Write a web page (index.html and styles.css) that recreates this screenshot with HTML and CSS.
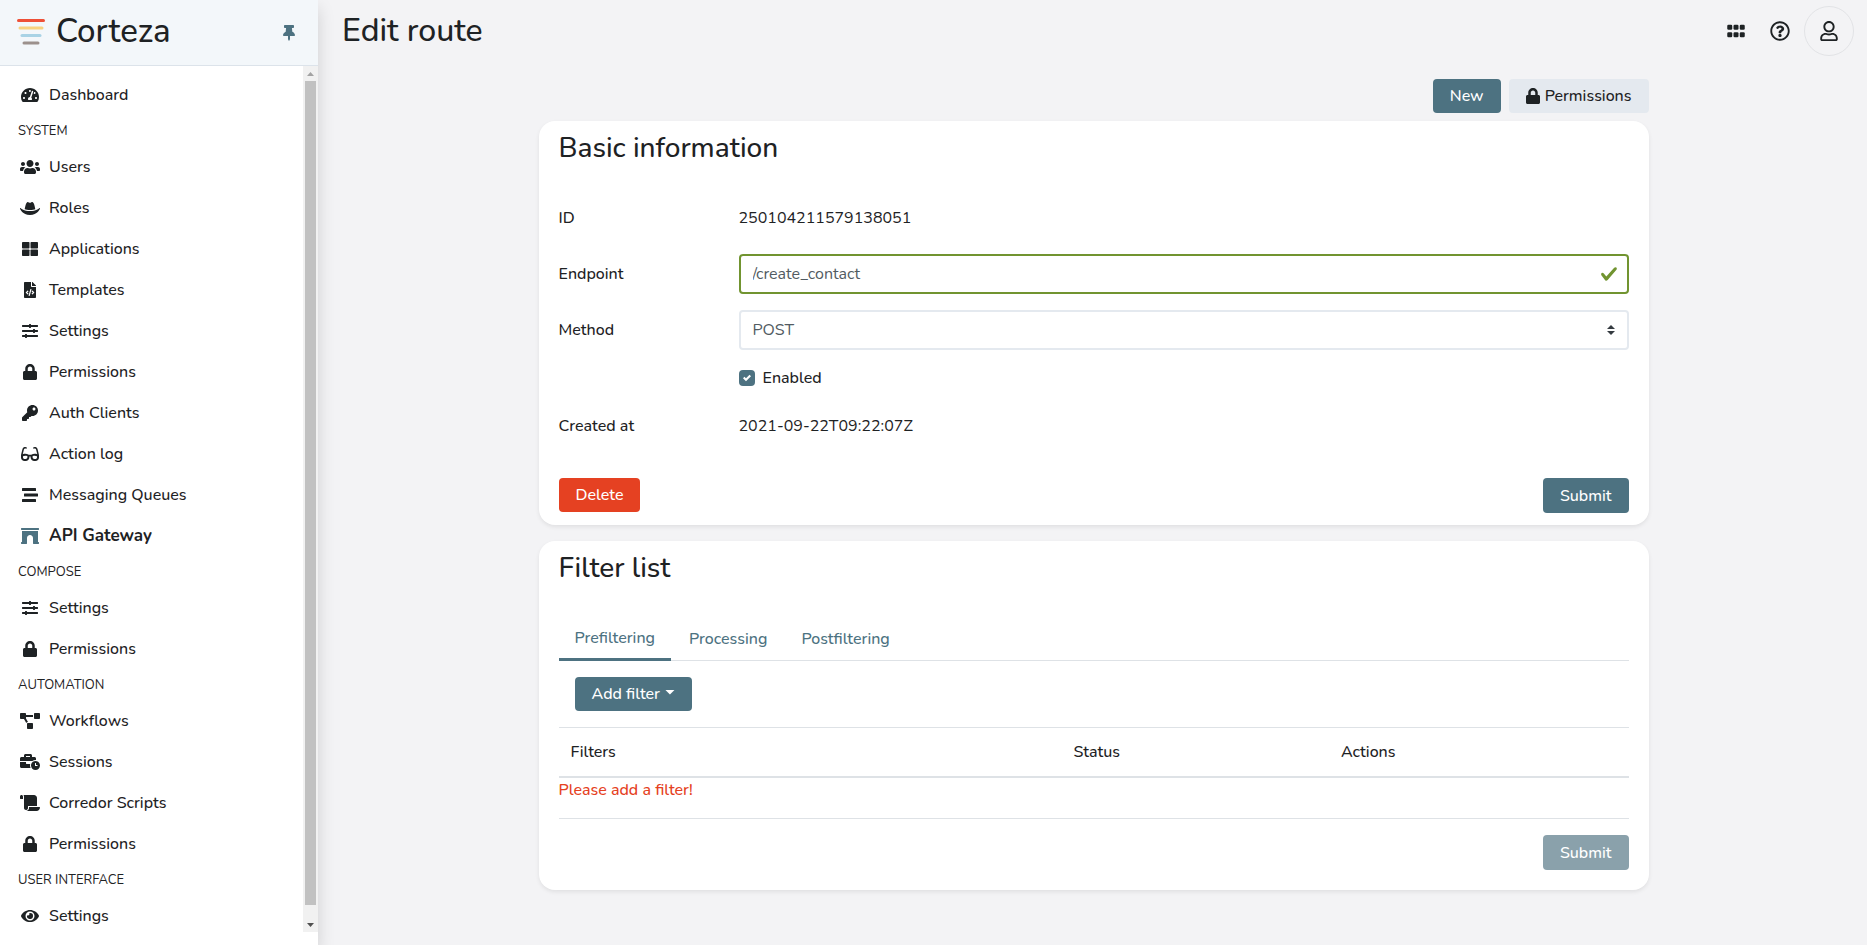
FILE: index.html
```html
<!DOCTYPE html>
<html lang="en">
<head>
<meta charset="utf-8">
<meta name="viewport" content="width=device-width, initial-scale=1">
<title>Edit route - Corteza</title>
<link rel="stylesheet" href="styles.css">
</head>
<body>
<svg class="sprite" aria-hidden="true">
  <symbol id="i-dashboard" viewBox="0 0 576 512"><path d="M288 32C128.94 32 0 160.94 0 320c0 52.8 14.25 102.26 39.06 144.8 5.61 9.62 16.3 15.2 27.44 15.2h443c11.14 0 21.83-5.58 27.44-15.2C561.75 422.26 576 372.8 576 320c0-159.06-128.94-288-288-288zm0 64c14.71 0 26.58 10.13 30.32 23.65-1.11 2.26-2.64 4.23-3.45 6.67l-9.22 27.67c-5.13 3.49-10.97 6.01-17.64 6.01-17.67 0-32-14.33-32-32S270.33 96 288 96zM96 384c-17.67 0-32-14.33-32-32s14.33-32 32-32 32 14.33 32 32-14.33 32-32 32zm48-160c-17.67 0-32-14.33-32-32s14.33-32 32-32 32 14.33 32 32-14.33 32-32 32zm246.77-72.41l-61.33 184C343.13 347.33 352 364.54 352 384c0 11.72-3.38 22.55-8.88 32H232.88c-5.5-9.45-8.88-20.28-8.88-32 0-33.94 26.5-61.43 59.9-63.59l61.34-184.01c4.17-12.56 17.73-19.45 30.36-15.17 12.57 4.19 19.35 17.79 15.17 30.36zm14.66 57.2l15.52-46.55c3.47-1.29 7.13-2.23 11.05-2.23 17.67 0 32 14.33 32 32s-14.33 32-32 32c-11.38-.01-20.89-6.28-26.57-15.22zM480 384c-17.67 0-32-14.33-32-32s14.33-32 32-32 32 14.33 32 32-14.33 32-32 32z"/></symbol>
  <symbol id="i-users" viewBox="0 0 640 512"><path d="M96 224c35.3 0 64-28.7 64-64s-28.7-64-64-64-64 28.7-64 64 28.7 64 64 64zm448 0c35.3 0 64-28.7 64-64s-28.7-64-64-64-64 28.7-64 64 28.7 64 64 64zm32 32h-64c-17.6 0-33.5 7.1-45.1 18.6 40.3 22.1 68.9 62 75.1 109.4h66c17.7 0 32-14.3 32-32v-32c0-35.3-28.7-64-64-64zm-256 0c61.9 0 112-50.1 112-112S381.9 32 320 32 208 82.1 208 144s50.1 112 112 112zm76.8 32h-8.3c-20.8 10-43.9 16-68.5 16s-47.6-6-68.5-16h-8.3C179.6 288 128 339.6 128 403.2V432c0 26.5 21.5 48 48 48h288c26.5 0 48-21.5 48-48v-28.8c0-63.6-51.6-115.2-115.2-115.2zm-223.7-13.4C161.5 263.1 145.6 256 128 256H64c-35.3 0-64 28.7-64 64v32c0 17.7 14.3 32 32 32h65.9c6.3-47.4 34.9-87.3 75.2-109.4z"/></symbol>
  <symbol id="i-hat" viewBox="0 0 640 512"><path d="M490 296.9C480.51 239.51 450.51 64 392.3 64c-14 0-26.49 5.93-37 14a58.21 58.21 0 0 1-70.58 0c-10.51-8-23-14-37-14-58.2 0-88.2 175.47-97.71 232.88C188.81 309.47 243.73 320 320 320s131.23-10.51 170-23.1zm142.9-37.18a16 16 0 0 0-19.75 1.5c-1 .9-101.27 90.78-293.16 90.78-190.82 0-292.22-89.94-293.24-90.84A16 16 0 0 0 1 278.53C1.73 280.55 78.32 480 320 480s318.27-199.45 319-201.47a16 16 0 0 0-6.09-18.81z"/></symbol>
  <symbol id="i-large" viewBox="0 0 512 512"><rect x="0" y="32" width="240" height="208" rx="24"/><rect x="272" y="32" width="240" height="208" rx="24"/><rect x="0" y="272" width="240" height="208" rx="24"/><rect x="272" y="272" width="240" height="208" rx="24"/></symbol>
  <symbol id="i-code" viewBox="0 0 384 512"><path d="M384 121.941V128H256V0h6.059c6.365 0 12.47 2.529 16.971 7.029l97.941 97.941A24.005 24.005 0 0 1 384 121.941zM248 160c-13.2 0-24-10.8-24-24V0H24C10.745 0 0 10.745 0 24v464c0 13.255 10.745 24 24 24h336c13.255 0 24-10.745 24-24V160H248zM123.206 400.505a5.4 5.4 0 0 1-7.633.246l-64.866-60.812a5.4 5.4 0 0 1 0-7.879l64.866-60.812a5.4 5.4 0 0 1 7.633.246l19.579 20.885a5.4 5.4 0 0 1-.372 7.747L101.65 336l40.763 35.874a5.4 5.4 0 0 1 .372 7.747l-19.579 20.884zm51.295 50.479l-27.453-7.97a5.402 5.402 0 0 1-3.681-6.692l61.44-211.626a5.402 5.402 0 0 1 6.692-3.681l27.452 7.97a5.4 5.4 0 0 1 3.68 6.692l-61.44 211.626a5.397 5.397 0 0 1-6.69 3.681zm160.792-111.045l-64.866 60.812a5.4 5.4 0 0 1-7.633-.246l-19.58-20.885a5.4 5.4 0 0 1 .372-7.747L284.35 336l-40.763-35.874a5.4 5.4 0 0 1-.372-7.747l19.58-20.885a5.4 5.4 0 0 1 7.633-.246l64.866 60.812a5.4 5.4 0 0 1-.001 7.879z"/></symbol>
  <symbol id="i-sliders" viewBox="0 0 512 512"><path d="M496 384H160v-16c0-8.8-7.2-16-16-16h-32c-8.8 0-16 7.2-16 16v16H16c-8.8 0-16 7.2-16 16v32c0 8.8 7.2 16 16 16h80v16c0 8.8 7.2 16 16 16h32c8.8 0 16-7.2 16-16v-16h336c8.8 0 16-7.2 16-16v-32c0-8.8-7.2-16-16-16zm0-160h-80v-16c0-8.8-7.2-16-16-16h-32c-8.8 0-16 7.2-16 16v16H16c-8.8 0-16 7.2-16 16v32c0 8.8 7.2 16 16 16h336v16c0 8.8 7.2 16 16 16h32c8.8 0 16-7.2 16-16v-16h80c8.8 0 16-7.2 16-16v-32c0-8.8-7.2-16-16-16zm0-160H288V48c0-8.8-7.2-16-16-16h-32c-8.8 0-16 7.2-16 16v16H16C7.2 64 0 71.2 0 80v32c0 8.8 7.2 16 16 16h208v16c0 8.8 7.2 16 16 16h32c8.8 0 16-7.2 16-16v-16h208c8.8 0 16-7.2 16-16V80c0-8.8-7.2-16-16-16z"/></symbol>
  <symbol id="i-lock" viewBox="0 0 448 512"><path d="M400 224h-24v-72C376 68.2 307.8 0 224 0S72 68.2 72 152v72H48c-26.5 0-48 21.5-48 48v192c0 26.5 21.5 48 48 48h352c26.5 0 48-21.5 48-48V272c0-26.5-21.5-48-48-48zm-104 0H152v-72c0-39.7 32.3-72 72-72s72 32.3 72 72v72z"/></symbol>
  <symbol id="i-key" viewBox="0 0 512 512"><path d="M512 176.001C512 273.203 433.202 352 336 352c-11.22 0-22.19-1.062-32.827-3.069l-24.012 27.014A23.999 23.999 0 0 1 261.223 384H224v40c0 13.255-10.745 24-24 24h-40v40c0 13.255-10.745 24-24 24H24c-13.255 0-24-10.745-24-24v-78.059c0-6.365 2.529-12.47 7.029-16.971l161.802-161.802C163.108 213.814 160 195.271 160 176 160 78.798 238.797.001 335.999 0 433.488-.001 512 78.511 512 176.001zM336 128c0 26.51 21.49 48 48 48s48-21.49 48-48-21.49-48-48-48-48 21.49-48 48z"/></symbol>
  <symbol id="i-glasses" viewBox="0 0 576 512"><path d="M574.1 280.37L528.75 98.66c-5.91-23.7-21.59-44.05-43-55.81-21.44-11.73-46.97-14.11-70.19-6.33l-15.25 5.08c-8.39 2.79-12.92 11.86-10.12 20.24l5.06 15.18c2.79 8.38 11.85 12.91 20.23 10.12l13.18-4.39c10.87-3.62 23-3.57 33.16 1.73 10.29 5.37 17.57 14.56 20.37 25.82l38.46 153.82c-22.19-6.81-49.79-12.46-81.2-12.46-34.77 0-73.98 7.02-114.85 26.74h-73.18c-40.87-19.74-80.08-26.75-114.86-26.75-31.42 0-59.02 5.65-81.21 12.46l38.46-153.83c2.79-11.25 10.09-20.45 20.38-25.81 10.16-5.3 22.28-5.35 33.15-1.73l13.17 4.39c8.38 2.79 17.44-1.74 20.23-10.12l5.06-15.18c2.8-8.38-1.73-17.45-10.12-20.24l-15.25-5.08c-23.22-7.78-48.75-5.41-70.19 6.33-21.41 11.77-37.09 32.11-43 55.8L1.9 280.37A64.218 64.218 0 0 0 0 295.86v70.25C0 429.01 51.58 480 115.2 480h37.12c60.28 0 110.37-45.94 114.88-105.37l2.93-38.63h35.75l2.93 38.63C313.31 434.06 363.4 480 423.68 480h37.12c63.62 0 115.2-50.99 115.2-113.88v-70.25c0-5.23-.64-10.43-1.9-15.5zm-370.72 89.42c-1.97 25.91-24.4 46.21-51.06 46.21H115.2C86.97 416 64 393.62 64 366.11v-37.54c18.12-6.49 43.42-12.92 72.58-12.92 23.86 0 47.26 4.33 69.93 12.92l-3.13 41.22zM512 366.12c0 27.51-22.97 49.88-51.2 49.88h-37.12c-26.67 0-49.1-20.3-51.06-46.21l-3.13-41.22c22.67-8.59 46.08-12.92 69.95-12.92 29.12 0 54.43 6.44 72.55 12.93v37.54z"/></symbol>
  <symbol id="i-stream" viewBox="0 0 512 512"><rect x="0" y="32" width="448" height="96" rx="16"/><rect x="64" y="208" width="448" height="96" rx="16"/><rect x="0" y="384" width="448" height="96" rx="16"/></symbol>
  <symbol id="i-archway" viewBox="0 0 576 512"><path d="M560 448h-16V96H32v352H16.02c-8.84 0-16 7.16-16 16v32c0 8.84 7.16 16 16 16H176c8.84 0 16-7.16 16-16V320c0-53.02 42.98-96 96-96s96 42.98 96 96l.02 160v16c0 8.84 7.16 16 16 16H560c8.84 0 16-7.16 16-16v-32c0-8.84-7.16-16-16-16zm0-448H16C7.16 0 0 7.16 0 16v32c0 8.84 7.16 16 16 16h544c8.84 0 16-7.16 16-16V16c0-8.84-7.16-16-16-16z"/></symbol>
  <symbol id="i-diagram" viewBox="0 0 640 512"><path d="M384 320H256c-17.67 0-32 14.33-32 32v128c0 17.67 14.33 32 32 32h128c17.67 0 32-14.33 32-32V352c0-17.67-14.33-32-32-32zM192 32c0-17.67-14.33-32-32-32H32C14.33 0 0 14.33 0 32v128c0 17.67 14.33 32 32 32h95.72l73.16 128.04C211.98 300.98 232.4 288 256 288h.28L192 175.51V128h224V64H192V32zM608 0H480c-17.67 0-32 14.33-32 32v128c0 17.67 14.33 32 32 32h128c17.67 0 32-14.33 32-32V32c0-17.67-14.33-32-32-32z"/></symbol>
  <symbol id="i-business" viewBox="0 0 640 512"><path d="M496 224c-79.59 0-144 64.41-144 144s64.41 144 144 144 144-64.41 144-144-64.41-144-144-144zm64 150.29c0 5.34-4.37 9.71-9.71 9.71h-60.57c-5.34 0-9.71-4.37-9.71-9.71v-76.57c0-5.34 4.37-9.71 9.71-9.71h12.57c5.34 0 9.71 4.37 9.71 9.71V352h38.29c5.34 0 9.71 4.37 9.71 9.71v12.58zM496 192c5.4 0 10.72.33 16 .81V144c0-25.6-22.4-48-48-48h-80V48c0-25.6-22.4-48-48-48H176c-25.6 0-48 22.4-48 48v48H48c-25.6 0-48 22.4-48 48v80h395.12c28.6-20.09 63.35-32 100.88-32zM320 96H192V64h128v32zm6.82 224H208c-8.84 0-16-7.16-16-16v-48H0v144c0 25.6 22.4 48 48 48h291.43C327.1 423.96 320 396.82 320 368c0-16.66 2.48-32.72 6.82-48z"/></symbol>
  <symbol id="i-scroll" viewBox="0 0 640 512"><path d="M48 0C21.53 0 0 21.53 0 48v64c0 8.84 7.16 16 16 16h80V48C96 21.53 74.47 0 48 0zm208 412.57V352h288V96c0-52.94-43.06-96-96-96H111.59C121.74 13.41 128 29.92 128 48v368c0 38.87 34.65 69.65 74.75 63.12C234.22 474 256 444.46 256 412.57zM288 384v32c0 52.93-43.06 96-96 96h336c61.86 0 112-50.14 112-112 0-8.84-7.16-16-16-16H288z"/></symbol>
  <symbol id="i-eye" viewBox="0 0 576 512"><path d="M572.52 241.4C518.29 135.59 410.93 64 288 64S57.68 135.64 3.48 241.41a32.35 32.35 0 0 0 0 29.19C57.71 376.41 165.07 448 288 448s230.32-71.64 284.52-177.41a32.35 32.35 0 0 0 0-29.19zM288 400a144 144 0 1 1 144-144 143.93 143.93 0 0 1-144 144zm0-240a95.31 95.31 0 0 0-25.31 3.79 47.85 47.85 0 0 1-66.9 66.9A95.78 95.78 0 1 0 288 160z"/></symbol>
  <symbol id="i-pin" viewBox="0 0 384 512"><path d="M298.028 214.267L285.793 96H328c13.255 0 24-10.745 24-24V24c0-13.255-10.745-24-24-24H56C42.745 0 32 10.745 32 24v48c0 13.255 10.745 24 24 24h42.207L85.972 214.267C37.465 236.82 0 277.261 0 328c0 13.255 10.745 24 24 24h136v104.007c0 1.242.289 2.467.845 3.578l24 48c2.941 5.882 11.364 5.893 14.311 0l24-48a8.008 8.008 0 0 0 .845-3.578V352h136c13.255 0 24-10.745 24-24-.001-51.183-37.983-91.42-85.973-113.733z"/></symbol>
  <symbol id="i-grip" viewBox="0 0 448 512"><rect x="0" y="96" width="128" height="128" rx="32"/><rect x="160" y="96" width="128" height="128" rx="32"/><rect x="320" y="96" width="128" height="128" rx="32"/><rect x="0" y="288" width="128" height="128" rx="32"/><rect x="160" y="288" width="128" height="128" rx="32"/><rect x="320" y="288" width="128" height="128" rx="32"/></symbol>
  <symbol id="i-help" viewBox="0 0 512 512"><path d="M256 8C119.043 8 8 119.083 8 256c0 136.997 111.043 248 248 248s248-111.003 248-248C504 119.083 392.957 8 256 8zm0 448c-110.532 0-200-89.431-200-200 0-110.495 89.472-200 200-200 110.491 0 200 89.471 200 200 0 110.53-89.431 200-200 200zm107.244-255.2c0 67.052-72.421 68.084-72.421 92.863V300c0 6.627-5.373 12-12 12h-45.647c-6.627 0-12-5.373-12-12v-8.659c0-35.745 27.1-50.034 47.579-61.516 17.561-9.845 28.324-16.541 28.324-29.579 0-17.246-21.999-28.693-39.784-28.693-23.189 0-33.894 10.977-48.942 29.969-4.057 5.12-11.46 6.071-16.666 2.124l-27.824-21.098c-5.107-3.872-6.251-11.066-2.644-16.363C184.846 131.491 214.94 112 261.794 112c49.071 0 101.45 38.304 101.45 88.8zM298 368c0 23.159-18.841 42-42 42s-42-18.841-42-42 18.841-42 42-42 42 18.841 42 42z"/></symbol>
  <symbol id="i-user" viewBox="0 0 448 512"><path d="M313.6 304c-28.7 0-42.5 16-89.6 16-47.1 0-60.8-16-89.6-16C60.2 304 0 364.2 0 438.4V464c0 26.5 21.5 48 48 48h352c26.5 0 48-21.5 48-48v-25.6c0-74.2-60.2-134.4-134.4-134.4zM400 464H48v-25.6c0-47.6 38.8-86.4 86.4-86.4 14.6 0 38.3 16 89.6 16 51.7 0 74.9-16 89.6-16 47.6 0 86.4 38.8 86.4 86.4V464zM224 288c79.5 0 144-64.5 144-144S303.5 0 224 0 80 64.5 80 144s64.5 144 144 144zm0-240c52.9 0 96 43.1 96 96s-43.1 96-96 96-96-43.1-96-96 43.1-96 96-96z"/></symbol>
  <symbol id="i-check" viewBox="0 0 8 8"><path d="M2.3 6.73L.6 4.53c-.4-1.04.46-1.4 1.1-.8l1.1 1.4 3.4-3.8c.6-.63 1.6-.27 1.2.7l-4 4.6c-.43.5-.8.4-1.1.1z"/></symbol>
  <symbol id="i-tick" viewBox="0 0 8 8"><path d="M6.564.75l-3.59 3.612-1.538-1.55L0 4.26l2.974 2.99L8 2.193z"/></symbol>
  <symbol id="i-updown" viewBox="0 0 4 5"><path d="M2 0L0 2h4zm0 5L0 3h4z"/></symbol>
</svg>

<div class="app">
  <aside class="sidebar">
    <div class="brand">
      <svg class="brand-mark" viewBox="0 0 28 28" aria-hidden="true">
        <path class="bar-red" d="M1.500 2.500h25"/>
        <path class="bar-yellow" d="M3 10h22"/>
        <path class="bar-blue" d="M5 17.500h18"/>
        <path class="bar-gray" d="M7 25h14"/>
      </svg>
      <span class="brand-name">Corteza</span>
      <button class="pin" type="button" aria-label="Unpin sidebar"><svg class="icon"><use href="#i-pin"/></svg></button>
    </div>
    <div class="nav-area">
      <nav class="nav">
        <a class="nav-item" href="#"><svg class="icon"><use href="#i-dashboard"/></svg>Dashboard</a>
        <h2 class="nav-label">SYSTEM</h2>
        <a class="nav-item" href="#"><svg class="icon"><use href="#i-users"/></svg>Users</a>
        <a class="nav-item" href="#"><svg class="icon"><use href="#i-hat"/></svg>Roles</a>
        <a class="nav-item" href="#"><svg class="icon"><use href="#i-large"/></svg>Applications</a>
        <a class="nav-item" href="#"><svg class="icon"><use href="#i-code"/></svg>Templates</a>
        <a class="nav-item" href="#"><svg class="icon"><use href="#i-sliders"/></svg>Settings</a>
        <a class="nav-item" href="#"><svg class="icon"><use href="#i-lock"/></svg>Permissions</a>
        <a class="nav-item" href="#"><svg class="icon"><use href="#i-key"/></svg>Auth Clients</a>
        <a class="nav-item" href="#"><svg class="icon"><use href="#i-glasses"/></svg>Action log</a>
        <a class="nav-item" href="#"><svg class="icon"><use href="#i-stream"/></svg>Messaging Queues</a>
        <a class="nav-item is-active" href="#" aria-current="page"><svg class="icon"><use href="#i-archway"/></svg>API Gateway</a>
        <h2 class="nav-label">COMPOSE</h2>
        <a class="nav-item" href="#"><svg class="icon"><use href="#i-sliders"/></svg>Settings</a>
        <a class="nav-item" href="#"><svg class="icon"><use href="#i-lock"/></svg>Permissions</a>
        <h2 class="nav-label">AUTOMATION</h2>
        <a class="nav-item" href="#"><svg class="icon"><use href="#i-diagram"/></svg>Workflows</a>
        <a class="nav-item" href="#"><svg class="icon"><use href="#i-business"/></svg>Sessions</a>
        <a class="nav-item" href="#"><svg class="icon"><use href="#i-scroll"/></svg>Corredor Scripts</a>
        <a class="nav-item" href="#"><svg class="icon"><use href="#i-lock"/></svg>Permissions</a>
        <h2 class="nav-label">USER INTERFACE</h2>
        <a class="nav-item" href="#"><svg class="icon"><use href="#i-eye"/></svg>Settings</a>
      </nav>
      <div class="scrollbar" aria-hidden="true">
        <span class="arrow arrow-up"></span>
        <span class="thumb"></span>
        <span class="arrow arrow-down"></span>
      </div>
    </div>
  </aside>

  <div class="page">
    <header class="topbar">
      <h1 class="page-title">Edit route</h1>
      <div class="tools">
        <button class="tool" type="button" aria-label="Applications"><svg class="icon"><use href="#i-grip"/></svg></button>
        <button class="tool" type="button" aria-label="Help"><svg class="icon"><use href="#i-help"/></svg></button>
        <button class="tool avatar" type="button" aria-label="Profile"><svg class="icon"><use href="#i-user"/></svg></button>
      </div>
    </header>

    <main class="content">
      <div class="actions">
        <button class="btn btn-primary" type="button">New</button>
        <button class="btn btn-light" type="button"><svg class="icon"><use href="#i-lock"/></svg>Permissions</button>
      </div>

      <form class="card">
        <h2 class="card-title">Basic information</h2>
        <div class="card-body fields">
          <div class="field"><span class="field-name">ID</span><span>250104211579138051</span></div>
          <div class="field">
            <label class="field-name" for="endpoint">Endpoint</label>
            <div class="control">
              <input class="input is-valid" id="endpoint" type="text" value="/create_contact">
              <svg class="valid-mark" aria-hidden="true"><use href="#i-check"/></svg>
            </div>
          </div>
          <div class="field">
            <label class="field-name" for="method">Method</label>
            <div class="control">
              <select class="input" id="method"><option>POST</option></select>
              <svg class="select-mark" aria-hidden="true"><use href="#i-updown"/></svg>
            </div>
          </div>
          <div class="field field-check">
            <label class="check" for="enabled">
              <span class="check-box">
                <input class="check-input" id="enabled" type="checkbox" checked>
                <svg class="check-mark" aria-hidden="true"><use href="#i-tick"/></svg>
              </span>
              Enabled
            </label>
          </div>
          <div class="field"><span class="field-name">Created at</span><span>2021-09-22T09:22:07Z</span></div>
        </div>
        <div class="card-footer">
          <button class="btn btn-danger" type="button">Delete</button>
          <button class="btn btn-primary btn-submit" type="submit">Submit</button>
        </div>
      </form>

      <section class="card">
        <h2 class="card-title">Filter list</h2>
        <div class="card-body">
          <div class="tabs" role="tablist">
            <button class="tab is-selected" type="button" role="tab" aria-selected="true">Prefiltering</button>
            <button class="tab" type="button" role="tab" aria-selected="false">Processing</button>
            <button class="tab" type="button" role="tab" aria-selected="false">Postfiltering</button>
          </div>
          <div class="filter-bar">
            <button class="btn btn-primary" type="button">Add filter<span class="caret"></span></button>
          </div>
          <table class="table">
            <thead><tr><th class="col-filters">Filters</th><th class="col-status">Status</th><th>Actions</th></tr></thead>
          </table>
          <p class="warning">Please add a filter!</p>
          <div class="submit-row">
            <button class="btn btn-primary btn-submit" type="submit" disabled>Submit</button>
          </div>
        </div>
      </section>
    </main>
  </div>
</div>
</body>
</html>
```
FILE: styles.css
```css
:root {
  --primary: #4d7281;
  --danger: #e54122;
  --success: #719430;
  --light: #e4e9ef;
  --line: #dee2e6;
  --text: #1e2224;
}

* { box-sizing: border-box; }

body {
  margin: 0;
  background: #f3f3f5;
  color: var(--text);
  font: 400 16px/24px Nunito, Lato, "Open Sans", sans-serif;
}

h1, h2, p { margin: 0; font-weight: 400; }

button, input, select { font: inherit; color: inherit; }

button { cursor: pointer; }

.sprite { display: none; }

.icon {
  display: block;
  width: 20px;
  height: 16px;
  fill: currentColor;
}

.app {
  display: grid;
  grid-template-columns: 318px 1fr;
  min-height: 100vh;
}

/* Sidebar */

.sidebar {
  display: flex;
  flex-direction: column;
  height: 100vh;
  background: #fff;
  box-shadow: 0 8px 16px rgba(0, 0, 0, .15);
}

.brand {
  display: flex;
  align-items: center;
  height: 66px;
  padding: 0 19px 2px 17px;
  background: #f3f7fa;
  border-bottom: 1px solid #dce3ea;
}

.brand-mark {
  width: 28px;
  height: 28px;
  fill: none;
  stroke-width: 3;
  stroke-linecap: round;
}

.bar-red { stroke: #ee5037; }
.bar-yellow { stroke: #f8d27f; }
.bar-blue { stroke: #a9d3e5; }
.bar-gray { stroke: #9c918c; }

.brand-name {
  flex: 1;
  margin-left: 11px;
  font-size: 33px;
  font-weight: 500;
  line-height: 40px;
}

.pin {
  padding: 2px 0 0;
  border: 0;
  background: none;
  color: var(--primary);
}

.nav-area {
  display: flex;
  flex: 1;
  min-height: 0;
  margin-bottom: 13px;
}

.nav {
  flex: 1;
  padding-top: 8px;
  overflow: hidden;
  font-weight: 500;
}

.nav-item {
  display: flex;
  align-items: center;
  gap: 9px;
  height: 41px;
  padding: 0 20px;
  color: inherit;
  text-decoration: none;
}

.nav-item.is-active { font-size: 17px; font-weight: 700; }
.nav-item.is-active .icon { color: var(--primary); }

.nav-label {
  height: 31px;
  padding: 6px 18px 0;
  font-size: 13px;
  line-height: 20px;
}

.scrollbar {
  display: flex;
  flex-direction: column;
  align-items: center;
  width: 15px;
  background: #f1f1f1;
}

.arrow {
  width: 7px;
  height: 4px;
  margin: 6px 0 5px;
  background: #a3a3a3;
  clip-path: polygon(50% 0, 100% 100%, 0 100%);
}

.arrow-down {
  background: #505050;
  clip-path: polygon(0 0, 100% 0, 50% 100%);
}

.thumb {
  flex: 1;
  width: 11px;
  margin-bottom: 12px;
  background: #c1c1c1;
}

/* Page */

.page { padding-left: 2px; }

.topbar {
  display: flex;
  align-items: center;
  justify-content: space-between;
  height: 62px;
  padding: 0 13px 0 22px;
}

.page-title {
  font-size: 32px;
  font-weight: 500;
  line-height: 40px;
}

.tools { display: flex; align-items: center; }

.tool {
  display: flex;
  align-items: center;
  justify-content: center;
  width: 44px;
  height: 50px;
  padding: 0;
  border: 0;
  background: none;
}

.tool .icon { height: 20px; }

.avatar {
  width: 50px;
  margin-left: 2px;
  border: 1px solid #e2e3e6;
  border-radius: 50%;
}

.content {
  max-width: 1110px;
  margin: 0 auto;
  padding: 17px 0 32px;
}

.actions {
  display: flex;
  justify-content: flex-end;
  gap: 8px;
  margin-bottom: 8px;
}

.btn {
  display: inline-flex;
  align-items: center;
  justify-content: center;
  gap: 5px;
  height: 34px;
  padding: 0 17px;
  border: 0;
  border-radius: 4px;
  font-weight: 500;
}

.btn .icon { width: 14px; }

.btn-primary { background: var(--primary); color: #fff; }
.btn-primary:disabled { background: #8aa1ab; }
.btn-danger { background: var(--danger); color: #fff; }
.btn-light { background: var(--light); }
.btn-submit { height: 35px; }

.caret {
  width: 10px;
  height: 5px;
  margin-bottom: 4px;
  background: currentColor;
  clip-path: polygon(0 0, 100% 0, 50% 100%);
}

.card {
  margin-bottom: 16px;
  border-radius: 16px;
  background: #fff;
  box-shadow: 0 2px 4px rgba(0, 0, 0, .08);
}

.card-title {
  padding: 9px 20px 12px;
  font-size: 28px;
  font-weight: 500;
  line-height: 36px;
}

.card-body { padding: 20px; }

.fields {
  display: flex;
  flex-direction: column;
  gap: 16px;
}

.field {
  display: grid;
  grid-template-columns: 180px 1fr;
  align-items: center;
  min-height: 40px;
}

.field-name { font-weight: 500; }

.field-check { min-height: 24px; }

.control { position: relative; }

.input {
  display: block;
  width: 100%;
  height: 40px;
  padding: 0 12px;
  border: 2px solid var(--light);
  border-radius: 4px;
  outline: 0;
  appearance: none;
  background: #fff;
  color: #525b62;
}

.input.is-valid { border-color: var(--success); }

.valid-mark {
  position: absolute;
  top: 10px;
  right: 11px;
  width: 18px;
  height: 20px;
  fill: var(--success);
}

.select-mark {
  position: absolute;
  top: 15px;
  right: 14px;
  width: 8px;
  height: 10px;
  fill: #343a40;
  pointer-events: none;
}

.check {
  display: flex;
  grid-column: 2;
  align-items: center;
  gap: 8px;
  font-weight: 500;
}

.check-box {
  position: relative;
  width: 16px;
  height: 16px;
}

.check-input {
  display: block;
  width: 16px;
  height: 16px;
  margin: 0;
  border-radius: 4px;
  appearance: none;
  background: var(--primary);
}

.check-mark {
  position: absolute;
  inset: 4px;
  width: 8px;
  height: 8px;
  fill: #fff;
  pointer-events: none;
}

.card-footer {
  display: flex;
  justify-content: space-between;
  padding: 12px 20px;
}

.tabs {
  display: flex;
  gap: 2px;
  border-bottom: 1px solid var(--line);
}

.tab {
  height: 42px;
  padding: 0 16px;
  border: 0;
  background: none;
  color: var(--primary);
  font-weight: 500;
}

.tab.is-selected {
  height: 43px;
  margin-bottom: -1px;
  border-bottom: 3px solid var(--primary);
}

.filter-bar { padding: 16px; }

.table {
  width: 100%;
  border-top: 1px solid var(--line);
  border-bottom: 2px solid var(--line);
  border-spacing: 0;
  table-layout: fixed;
}

.table th {
  padding: 12px;
  font-weight: 500;
  text-align: left;
}

.col-filters { width: 47%; }
.col-status { width: 25%; }

.warning {
  padding-bottom: 16px;
  border-bottom: 1px solid var(--line);
  color: var(--danger);
  font-weight: 500;
}

.submit-row {
  display: flex;
  justify-content: flex-end;
  padding-top: 16px;
}
```
